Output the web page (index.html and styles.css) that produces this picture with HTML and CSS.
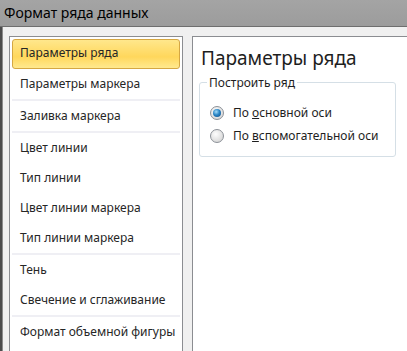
FILE: index.html
```html
<!DOCTYPE html>
<html lang="ru">
<head>
    <meta charset="UTF-8">
    <title>Формат ряда данных</title>
    <link rel="stylesheet" href="styles.css">
</head>
<body>
    <div class="titlebar">Формат ряда данных</div>

    <div class="dialog">
        <!-- Left navigation list -->
        <ul class="nav">
            <li class="nav-item active">Параметры ряда</li>
            <li class="nav-item">Параметры маркера</li>
            <li class="nav-sep"></li>
            <li class="nav-item">Заливка маркера</li>
            <li class="nav-sep"></li>
            <li class="nav-item">Цвет линии</li>
            <li class="nav-item">Тип линии</li>
            <li class="nav-item">Цвет линии маркера</li>
            <li class="nav-item">Тип линии маркера</li>
            <li class="nav-sep"></li>
            <li class="nav-item">Тень</li>
            <li class="nav-item">Свечение и сглаживание</li>
            <li class="nav-sep"></li>
            <li class="nav-item">Формат объемной фигуры</li>
        </ul>

        <!-- Right content page -->
        <div class="page">
            <h2>Параметры ряда</h2>
            <fieldset class="group">
                <legend>Построить ряд</legend>
                <label class="radio">
                    <span class="radio-mark checked"></span>
                    <span>По <u>о</u>сновной оси</span>
                </label>
                <label class="radio">
                    <span class="radio-mark"></span>
                    <span>По <u>в</u>спомогательной оси</span>
                </label>
            </fieldset>
        </div>
    </div>
</body>
</html>
```

FILE: styles.css
```css
/* Base */
html, body {
    margin: 0;
    height: 100%;
    overflow: hidden;
}

body {
    font-family: "Noto Sans", "DejaVu Sans", sans-serif;
    font-size: 12px;
    color: #1e1e1e;
    background: #f0f0f0;
}

/* Title bar */
.titlebar {
    height: 26px;
    line-height: 26px;
    padding-left: 4px;
    font-size: 14px;
    color: #000;
    background: linear-gradient(#a4a4a4, #9c9c9c);
    border-bottom: 1px solid #6e6e6e;
    white-space: nowrap;
}

/* Dialog body */
.dialog {
    display: flex;
    align-items: flex-start;
    height: 100%;
    padding: 9px 0 0 7px;
    border-left: 2px solid #4c4c4c;
    box-shadow: inset 1px 0 0 #8c8c8c;
}

/* Navigation list */
.nav {
    list-style: none;
    margin: 0;
    padding: 1px 2px;
    width: 168px;
    height: 400px;
    background: #fff;
    border: 1px solid #8b8d91;
}

.nav-item {
    height: 30px;
    line-height: 30px;
    padding-left: 8px;
    white-space: nowrap;
    color: #262626;
}

.nav-item.active {
    height: 30px;
    margin-top: 1px;
    line-height: 26px;
    padding-left: 7px;
    border: 1px solid #d5a742;
    border-radius: 3px;
    background: linear-gradient(#ffe78c, #ffd75c 60%, #ffe98e);
    box-sizing: border-box;
}

.nav-sep {
    height: 2px;
    background: #efeff4;
}

/* Content page */
.page {
    flex: 1;
    height: 400px;
    margin-left: 9px;
    padding: 0 0 0 8px;
    background: #fff;
    border: 1px solid #8b8d91;
    border-right: none;
}

h2 {
    margin: 8px 0 0;
    font-size: 19px;
    font-weight: normal;
    line-height: 26px;
    color: #1e1e1e;
}

/* Group box */
.group {
    width: 185px;
    margin: 3px 0 0 -2px;
    padding: 10px 0 9px 10px;
    border: 1px solid #d5dfe6;
    border-radius: 3px;
}

.group legend {
    padding: 0 2px;
    margin-left: -3px;
    color: #1e1e1e;
}

.radio {
    display: flex;
    align-items: center;
    height: 23px;
    white-space: nowrap;
}

.radio u {
    text-decoration-thickness: 1px;
}

.radio-mark {
    width: 14px;
    height: 14px;
    margin-right: 9px;
    border-radius: 50%;
    border: 1px solid #8c9198;
    background: radial-gradient(circle at 40% 35%, #fdfdfd, #dcdcdc 70%, #c8c8c8);
    box-sizing: border-box;
    position: relative;
}

.radio-mark.checked::after {
    content: "";
    position: absolute;
    left: 2px;
    top: 2px;
    width: 8px;
    height: 8px;
    border-radius: 50%;
    background: radial-gradient(circle at 40% 35%, #a6dcf8, #2a86c6 45%, #0d4680);
}
```
